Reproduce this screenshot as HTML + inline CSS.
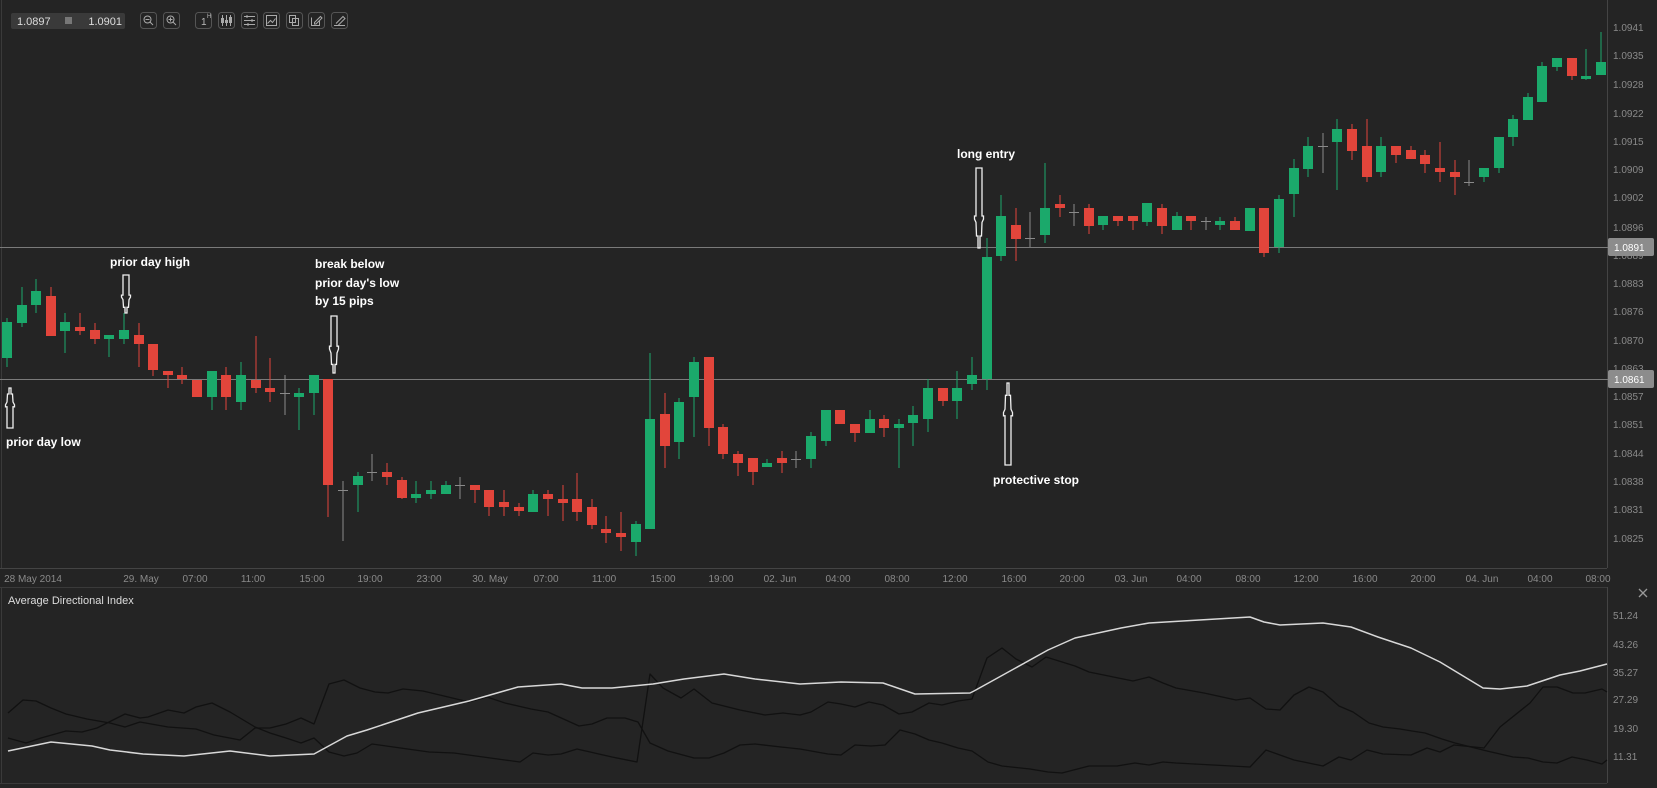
<!DOCTYPE html>
<html><head><meta charset="utf-8">
<style>
html,body{margin:0;padding:0;background:#242424;width:1657px;height:788px;overflow:hidden}
svg{display:block}
text{font-family:"Liberation Sans",sans-serif}
.pl{fill:#8a8a8a;font-size:10px}
.tl{fill:#8a8a8a;font-size:10px;text-anchor:middle}
.an{fill:#fff;font-size:12px;font-weight:bold}
.g{fill:#1ba96b}.r{fill:#e2453b}.d{fill:#8a8a8a}
.ar{fill:none;stroke:#f0f0f0;stroke-width:1.3}
.btn{fill:none;stroke:#555;stroke-width:1}
.ic{fill:none;stroke:#aaa;stroke-width:1}
</style></head><body>
<svg width="1657" height="788" viewBox="0 0 1657 788" xmlns="http://www.w3.org/2000/svg">
<rect width="1657" height="788" fill="#242424"/>
<line x1="1.5" y1="0" x2="1.5" y2="568" stroke="#3a3a3a"/>
<line x1="1607.5" y1="0" x2="1607.5" y2="568" stroke="#444"/>
<line x1="0" y1="568.5" x2="1607" y2="568.5" stroke="#444"/>
<line x1="0" y1="587.5" x2="1607" y2="587.5" stroke="#3a3a3a"/>
<line x1="1607.5" y1="587" x2="1607.5" y2="783" stroke="#444"/>
<line x1="0" y1="783.5" x2="1607" y2="783.5" stroke="#3a3a3a"/>
<line x1="1.5" y1="587" x2="1.5" y2="783" stroke="#3a3a3a"/>

<rect x="11" y="13" width="114" height="16" rx="2" fill="#3a3a3a"/>
<text x="17" y="25" fill="#ddd" font-size="11">1.0897</text>
<rect x="65" y="17" width="7" height="7" fill="#777"/>
<text x="122" y="25" fill="#ddd" font-size="11" text-anchor="end">1.0901</text>
<g>
<rect class="btn" x="140.5" y="12.5" width="16" height="16" rx="3"/>
<circle class="ic" cx="147.5" cy="19.5" r="3.5"/><line class="ic" x1="145.5" y1="19.5" x2="149.5" y2="19.5"/><line class="ic" x1="150" y1="22" x2="153" y2="25"/>
<rect class="btn" x="163.5" y="12.5" width="16" height="16" rx="3"/>
<circle class="ic" cx="170.5" cy="19.5" r="3.5"/><line class="ic" x1="168.5" y1="19.5" x2="172.5" y2="19.5"/><line class="ic" x1="170.5" y1="17.5" x2="170.5" y2="21.5"/><line class="ic" x1="173" y1="22" x2="176" y2="25"/>
<rect class="btn" x="195.5" y="12.5" width="16" height="16" rx="3"/>
<text x="201" y="25" fill="#bbb" font-size="10">1</text><text x="207" y="18" fill="#bbb" font-size="6">H</text>
<rect class="btn" x="218.5" y="12.5" width="16" height="16" rx="3"/>
<path class="ic" d="M222.5 15v11M226.5 15v11M230.5 15v11"/><rect x="221" y="18" width="3" height="5" fill="#aaa"/><rect x="225" y="20" width="3" height="3" fill="#aaa"/><rect x="229" y="17" width="3" height="6" fill="#aaa"/>
<rect class="btn" x="241.5" y="12.5" width="16" height="16" rx="3"/>
<path class="ic" d="M244 16.5h11M244 20.5h11M244 24.5h11"/><path d="M247 15v3M252 19v3M248 23v3" stroke="#aaa"/>
<rect class="btn" x="263.5" y="12.5" width="16" height="16" rx="3"/>
<rect class="ic" x="266.5" y="15.5" width="10" height="10"/><path class="ic" d="M267.5 23.5l3-3 2 2 3-4"/>
<rect class="btn" x="286.5" y="12.5" width="16" height="16" rx="3"/>
<rect class="ic" x="289.5" y="15.5" width="6" height="7"/><rect class="ic" x="292.5" y="18.5" width="6" height="7"/>
<rect class="btn" x="308.5" y="12.5" width="16" height="16" rx="3"/>
<path class="ic" d="M311.5 17.5v8h8v-5M314.5 22.5l6-6 1.5 1.5-6 6h-1.5z"/>
<rect class="btn" x="331.5" y="12.5" width="16" height="16" rx="3"/>
<path class="ic" d="M334 25.5h11M336 23.5l7-7 2 2-7 7"/>
</g>

<g class="pl">
<text x="1613" y="31">1.0941</text>
<text x="1613" y="59">1.0935</text>
<text x="1613" y="88">1.0928</text>
<text x="1613" y="117">1.0922</text>
<text x="1613" y="145">1.0915</text>
<text x="1613" y="173">1.0909</text>
<text x="1613" y="201">1.0902</text>
<text x="1613" y="231">1.0896</text>
<text x="1613" y="259">1.0889</text>
<text x="1613" y="287">1.0883</text>
<text x="1613" y="315">1.0876</text>
<text x="1613" y="344">1.0870</text>
<text x="1613" y="372">1.0863</text>
<text x="1613" y="400">1.0857</text>
<text x="1613" y="428">1.0851</text>
<text x="1613" y="457">1.0844</text>
<text x="1613" y="485">1.0838</text>
<text x="1613" y="513">1.0831</text>
<text x="1613" y="542">1.0825</text>
</g>

<line x1="0" y1="247.5" x2="1608" y2="247.5" stroke="#7a7a7a"/>
<line x1="0" y1="379.5" x2="1608" y2="379.5" stroke="#7a7a7a"/>
<rect x="1608" y="238" width="46" height="18" rx="2" fill="#8c8c8c"/>
<text x="1614" y="251" fill="#fff" font-size="10">1.0891</text>
<rect x="1608" y="370" width="46" height="18" rx="2" fill="#8c8c8c"/>
<text x="1614" y="383" fill="#fff" font-size="10">1.0861</text>

<g class="tl">
<text x="33" y="582">28 May 2014</text>
<text x="141" y="582">29. May</text>
<text x="195" y="582">07:00</text>
<text x="253" y="582">11:00</text>
<text x="312" y="582">15:00</text>
<text x="370" y="582">19:00</text>
<text x="429" y="582">23:00</text>
<text x="490" y="582">30. May</text>
<text x="546" y="582">07:00</text>
<text x="604" y="582">11:00</text>
<text x="663" y="582">15:00</text>
<text x="721" y="582">19:00</text>
<text x="780" y="582">02. Jun</text>
<text x="838" y="582">04:00</text>
<text x="897" y="582">08:00</text>
<text x="955" y="582">12:00</text>
<text x="1014" y="582">16:00</text>
<text x="1072" y="582">20:00</text>
<text x="1131" y="582">03. Jun</text>
<text x="1189" y="582">04:00</text>
<text x="1248" y="582">08:00</text>
<text x="1306" y="582">12:00</text>
<text x="1365" y="582">16:00</text>
<text x="1423" y="582">20:00</text>
<text x="1482" y="582">04. Jun</text>
<text x="1540" y="582">04:00</text>
<text x="1598" y="582">08:00</text>
</g>

<g>
<rect class="g" x="6.5" y="318" width="1" height="49"/><rect class="g" x="2" y="322" width="10" height="36"/>
<rect class="g" x="21.5" y="287" width="1" height="40"/><rect class="g" x="17" y="305" width="10" height="18"/>
<rect class="g" x="35.5" y="279" width="1" height="34"/><rect class="g" x="31" y="291" width="10" height="14"/>
<rect class="r" x="50.5" y="287" width="1" height="49"/><rect class="r" x="46" y="296" width="10" height="40"/>
<rect class="g" x="64.5" y="313" width="1" height="40"/><rect class="g" x="60" y="322" width="10" height="9"/>
<rect class="r" x="79.5" y="313" width="1" height="22"/><rect class="r" x="75" y="327" width="10" height="4"/>
<rect class="r" x="94.5" y="323" width="1" height="21"/><rect class="r" x="90" y="330" width="10" height="9"/>
<rect class="g" x="108.5" y="335" width="1" height="22"/><rect class="g" x="104" y="335" width="10" height="4"/>
<rect class="g" x="123.5" y="313" width="1" height="31"/><rect class="g" x="119" y="330" width="10" height="9"/>
<rect class="r" x="138.5" y="323" width="1" height="44"/><rect class="r" x="134" y="335" width="10" height="9"/>
<rect class="r" x="152.5" y="344" width="1" height="32"/><rect class="r" x="148" y="344" width="10" height="26"/>
<rect class="r" x="167.5" y="371" width="1" height="17"/><rect class="r" x="163" y="371" width="10" height="4"/>
<rect class="r" x="181.5" y="367" width="1" height="17"/><rect class="r" x="177" y="375" width="10" height="4"/>
<rect class="r" x="196.5" y="380" width="1" height="17"/><rect class="r" x="192" y="380" width="10" height="17"/>
<rect class="g" x="211.5" y="371" width="1" height="39"/><rect class="g" x="207" y="371" width="10" height="26"/>
<rect class="r" x="225.5" y="367" width="1" height="43"/><rect class="r" x="221" y="375" width="10" height="22"/>
<rect class="g" x="240.5" y="362" width="1" height="48"/><rect class="g" x="236" y="375" width="10" height="27"/>
<rect class="r" x="255.5" y="336" width="1" height="57"/><rect class="r" x="251" y="380" width="10" height="8"/>
<rect class="r" x="269.5" y="358" width="1" height="44"/><rect class="r" x="265" y="388" width="10" height="4"/>
<rect class="d" x="284.5" y="375" width="1" height="40"/><rect class="d" x="280" y="393" width="10" height="1"/>
<rect class="g" x="298.5" y="388" width="1" height="42"/><rect class="g" x="294" y="393" width="10" height="4"/>
<rect class="g" x="313.5" y="375" width="1" height="40"/><rect class="g" x="309" y="375" width="10" height="18"/>
<rect class="r" x="327.5" y="379" width="1" height="138"/><rect class="r" x="323" y="379" width="10" height="106"/>
<rect class="d" x="342.5" y="481" width="1" height="60"/><rect class="d" x="338" y="490" width="10" height="1"/>
<rect class="g" x="357.5" y="472" width="1" height="40"/><rect class="g" x="353" y="476" width="10" height="9"/>
<rect class="d" x="371.5" y="454" width="1" height="27"/><rect class="d" x="367" y="472" width="10" height="1"/>
<rect class="r" x="386.5" y="463" width="1" height="22"/><rect class="r" x="382" y="472" width="10" height="5"/>
<rect class="r" x="401.5" y="477" width="1" height="22"/><rect class="r" x="397" y="480" width="10" height="18"/>
<rect class="g" x="415.5" y="481" width="1" height="22"/><rect class="g" x="411" y="494" width="10" height="4"/>
<rect class="g" x="430.5" y="481" width="1" height="18"/><rect class="g" x="426" y="490" width="10" height="4"/>
<rect class="g" x="445.5" y="481" width="1" height="13"/><rect class="g" x="441" y="485" width="10" height="9"/>
<rect class="d" x="459.5" y="477" width="1" height="22"/><rect class="d" x="455" y="485" width="10" height="1"/>
<rect class="r" x="474.5" y="485" width="1" height="18"/><rect class="r" x="470" y="485" width="10" height="5"/>
<rect class="r" x="488.5" y="490" width="1" height="26"/><rect class="r" x="484" y="490" width="10" height="17"/>
<rect class="r" x="503.5" y="490" width="1" height="26"/><rect class="r" x="499" y="502" width="10" height="5"/>
<rect class="r" x="518.5" y="503" width="1" height="13"/><rect class="r" x="514" y="507" width="10" height="4"/>
<rect class="g" x="532.5" y="490" width="1" height="22"/><rect class="g" x="528" y="494" width="10" height="18"/>
<rect class="r" x="547.5" y="490" width="1" height="26"/><rect class="r" x="543" y="494" width="10" height="5"/>
<rect class="r" x="562.5" y="485" width="1" height="36"/><rect class="r" x="558" y="499" width="10" height="4"/>
<rect class="r" x="576.5" y="473" width="1" height="48"/><rect class="r" x="572" y="499" width="10" height="13"/>
<rect class="r" x="591.5" y="499" width="1" height="30"/><rect class="r" x="587" y="507" width="10" height="18"/>
<rect class="r" x="605.5" y="516" width="1" height="27"/><rect class="r" x="601" y="529" width="10" height="4"/>
<rect class="r" x="620.5" y="512" width="1" height="39"/><rect class="r" x="616" y="533" width="10" height="4"/>
<rect class="g" x="635.5" y="521" width="1" height="35"/><rect class="g" x="631" y="524" width="10" height="18"/>
<rect class="g" x="649.5" y="353" width="1" height="176"/><rect class="g" x="645" y="419" width="10" height="110"/>
<rect class="r" x="664.5" y="393" width="1" height="75"/><rect class="r" x="660" y="414" width="10" height="32"/>
<rect class="g" x="678.5" y="398" width="1" height="61"/><rect class="g" x="674" y="402" width="10" height="40"/>
<rect class="g" x="693.5" y="357" width="1" height="80"/><rect class="g" x="689" y="362" width="10" height="35"/>
<rect class="r" x="708.5" y="357" width="1" height="89"/><rect class="r" x="704" y="357" width="10" height="71"/>
<rect class="r" x="722.5" y="424" width="1" height="35"/><rect class="r" x="718" y="427" width="10" height="27"/>
<rect class="r" x="737.5" y="451" width="1" height="25"/><rect class="r" x="733" y="454" width="10" height="9"/>
<rect class="r" x="752.5" y="458" width="1" height="27"/><rect class="r" x="748" y="458" width="10" height="14"/>
<rect class="g" x="766.5" y="459" width="1" height="8"/><rect class="g" x="762" y="463" width="10" height="4"/>
<rect class="r" x="781.5" y="451" width="1" height="22"/><rect class="r" x="777" y="458" width="10" height="5"/>
<rect class="d" x="795.5" y="451" width="1" height="17"/><rect class="d" x="791" y="459" width="10" height="1"/>
<rect class="g" x="810.5" y="432" width="1" height="36"/><rect class="g" x="806" y="436" width="10" height="23"/>
<rect class="g" x="825.5" y="410" width="1" height="36"/><rect class="g" x="821" y="410" width="10" height="31"/>
<rect class="r" x="839.5" y="410" width="1" height="14"/><rect class="r" x="835" y="410" width="10" height="14"/>
<rect class="r" x="854.5" y="424" width="1" height="18"/><rect class="r" x="850" y="424" width="10" height="9"/>
<rect class="g" x="869.5" y="410" width="1" height="23"/><rect class="g" x="865" y="419" width="10" height="14"/>
<rect class="r" x="883.5" y="415" width="1" height="22"/><rect class="r" x="879" y="419" width="10" height="9"/>
<rect class="g" x="898.5" y="419" width="1" height="49"/><rect class="g" x="894" y="424" width="10" height="4"/>
<rect class="g" x="912.5" y="406" width="1" height="40"/><rect class="g" x="908" y="415" width="10" height="8"/>
<rect class="g" x="927.5" y="379" width="1" height="53"/><rect class="g" x="923" y="388" width="10" height="31"/>
<rect class="r" x="942.5" y="388" width="1" height="18"/><rect class="r" x="938" y="388" width="10" height="13"/>
<rect class="g" x="956.5" y="371" width="1" height="48"/><rect class="g" x="952" y="388" width="10" height="13"/>
<rect class="g" x="971.5" y="357" width="1" height="33"/><rect class="g" x="967" y="375" width="10" height="9"/>
<rect class="g" x="986.5" y="238" width="1" height="152"/><rect class="g" x="982" y="257" width="10" height="122"/>
<rect class="g" x="1000.5" y="195" width="1" height="66"/><rect class="g" x="996" y="216" width="10" height="40"/>
<rect class="r" x="1015.5" y="208" width="1" height="53"/><rect class="r" x="1011" y="225" width="10" height="14"/>
<rect class="d" x="1029.5" y="212" width="1" height="35"/><rect class="d" x="1025" y="238" width="10" height="1"/>
<rect class="g" x="1044.5" y="163" width="1" height="80"/><rect class="g" x="1040" y="208" width="10" height="27"/>
<rect class="r" x="1059.5" y="195" width="1" height="22"/><rect class="r" x="1055" y="204" width="10" height="4"/>
<rect class="d" x="1073.5" y="204" width="1" height="22"/><rect class="d" x="1069" y="212" width="10" height="1"/>
<rect class="r" x="1088.5" y="204" width="1" height="30"/><rect class="r" x="1084" y="208" width="10" height="18"/>
<rect class="g" x="1102.5" y="216" width="1" height="14"/><rect class="g" x="1098" y="216" width="10" height="9"/>
<rect class="r" x="1117.5" y="216" width="1" height="10"/><rect class="r" x="1113" y="216" width="10" height="5"/>
<rect class="r" x="1132.5" y="216" width="1" height="14"/><rect class="r" x="1128" y="216" width="10" height="5"/>
<rect class="g" x="1146.5" y="203" width="1" height="23"/><rect class="g" x="1142" y="203" width="10" height="19"/>
<rect class="r" x="1161.5" y="204" width="1" height="30"/><rect class="r" x="1157" y="208" width="10" height="18"/>
<rect class="g" x="1176.5" y="212" width="1" height="18"/><rect class="g" x="1172" y="216" width="10" height="14"/>
<rect class="r" x="1190.5" y="216" width="1" height="14"/><rect class="r" x="1186" y="216" width="10" height="5"/>
<rect class="d" x="1205.5" y="217" width="1" height="13"/><rect class="d" x="1201" y="221" width="10" height="1"/>
<rect class="g" x="1219.5" y="217" width="1" height="13"/><rect class="g" x="1215" y="221" width="10" height="4"/>
<rect class="r" x="1234.5" y="217" width="1" height="13"/><rect class="r" x="1230" y="221" width="10" height="9"/>
<rect class="g" x="1249.5" y="208" width="1" height="23"/><rect class="g" x="1245" y="208" width="10" height="23"/>
<rect class="r" x="1263.5" y="208" width="1" height="49"/><rect class="r" x="1259" y="208" width="10" height="45"/>
<rect class="g" x="1278.5" y="195" width="1" height="58"/><rect class="g" x="1274" y="199" width="10" height="48"/>
<rect class="g" x="1293.5" y="159" width="1" height="58"/><rect class="g" x="1289" y="168" width="10" height="26"/>
<rect class="g" x="1307.5" y="137" width="1" height="40"/><rect class="g" x="1303" y="146" width="10" height="23"/>
<rect class="d" x="1322.5" y="133" width="1" height="40"/><rect class="d" x="1318" y="146" width="10" height="1"/>
<rect class="g" x="1336.5" y="119" width="1" height="71"/><rect class="g" x="1332" y="129" width="10" height="13"/>
<rect class="r" x="1351.5" y="124" width="1" height="36"/><rect class="r" x="1347" y="129" width="10" height="22"/>
<rect class="r" x="1366.5" y="119" width="1" height="63"/><rect class="r" x="1362" y="146" width="10" height="31"/>
<rect class="g" x="1380.5" y="137" width="1" height="40"/><rect class="g" x="1376" y="146" width="10" height="26"/>
<rect class="r" x="1395.5" y="146" width="1" height="17"/><rect class="r" x="1391" y="146" width="10" height="9"/>
<rect class="r" x="1410.5" y="146" width="1" height="13"/><rect class="r" x="1406" y="150" width="10" height="9"/>
<rect class="r" x="1424.5" y="150" width="1" height="23"/><rect class="r" x="1420" y="155" width="10" height="9"/>
<rect class="r" x="1439.5" y="142" width="1" height="40"/><rect class="r" x="1435" y="168" width="10" height="4"/>
<rect class="r" x="1454.5" y="160" width="1" height="35"/><rect class="r" x="1450" y="172" width="10" height="5"/>
<rect class="d" x="1468.5" y="160" width="1" height="26"/><rect class="d" x="1464" y="182" width="10" height="1"/>
<rect class="g" x="1483.5" y="168" width="1" height="14"/><rect class="g" x="1479" y="168" width="10" height="9"/>
<rect class="g" x="1498.5" y="137" width="1" height="36"/><rect class="g" x="1494" y="137" width="10" height="31"/>
<rect class="g" x="1512.5" y="115" width="1" height="31"/><rect class="g" x="1508" y="119" width="10" height="18"/>
<rect class="g" x="1527.5" y="93" width="1" height="27"/><rect class="g" x="1523" y="97" width="10" height="23"/>
<rect class="g" x="1541.5" y="62" width="1" height="40"/><rect class="g" x="1537" y="66" width="10" height="36"/>
<rect class="g" x="1556.5" y="58" width="1" height="13"/><rect class="g" x="1552" y="58" width="10" height="9"/>
<rect class="r" x="1571.5" y="58" width="1" height="22"/><rect class="r" x="1567" y="58" width="10" height="18"/>
<rect class="g" x="1585.5" y="49" width="1" height="31"/><rect class="g" x="1581" y="76" width="10" height="3"/>
<rect class="g" x="1600.5" y="32" width="1" height="43"/><rect class="g" x="1596" y="62" width="10" height="13"/>
</g>

<text class="an" x="110" y="266">prior day high</text>
<text class="an" x="6" y="446">prior day low</text>
<text class="an" x="315" y="268">break below</text>
<text class="an" x="315" y="287">prior day's low</text>
<text class="an" x="315" y="305">by 15 pips</text>
<text class="an" x="957" y="158">long entry</text>
<text class="an" x="993" y="484">protective stop</text>

<g class="ar">
<polygon vector-effect="non-scaling-stroke" transform="translate(126,275) scale(1,0.38)" points="-3,0 3,0 3,53 4.5,53 4.5,58 3,65 2.5,85 1,85 1,100 -1,100 -1,85 -2.5,85 -3,65 -4.5,58 -4.5,53 -3,53"/>
<polygon vector-effect="non-scaling-stroke" transform="translate(334,316) scale(1,0.57)" points="-3,0 3,0 3,53 4.5,53 4.5,58 3,65 2.5,85 1,85 1,100 -1,100 -1,85 -2.5,85 -3,65 -4.5,58 -4.5,53 -3,53"/>
<polygon vector-effect="non-scaling-stroke" transform="translate(979,168) scale(1,0.80)" points="-3,0 3,0 3,60 4.5,60 4.5,64 3,68 2.5,85 1,85 1,100 -1,100 -1,85 -2.5,85 -3,68 -4.5,64 -4.5,60 -3,60"/>
<polygon vector-effect="non-scaling-stroke" transform="translate(10,428) scale(1,-0.40)" points="-3,0 3,0 3,53 4.5,53 4.5,58 3,65 2.5,85 1,85 1,100 -1,100 -1,85 -2.5,85 -3,65 -4.5,58 -4.5,53 -3,53"/>
<polygon vector-effect="non-scaling-stroke" transform="translate(1008,465) scale(1,-0.82)" points="-3,0 3,0 3,60 4.5,60 4.5,64 3,68 2.5,85 1,85 1,100 -1,100 -1,85 -2.5,85 -3,68 -4.5,64 -4.5,60 -3,60"/>
</g>

<text x="8" y="604" fill="#ddd" font-size="11">Average Directional Index</text>
<path d="M1639 589l8 8M1647 589l-8 8" stroke="#999" stroke-width="1.3"/>
<g class="pl">
<text x="1613" y="619">51.24</text>
<text x="1613" y="648">43.26</text>
<text x="1613" y="676">35.27</text>
<text x="1613" y="703">27.29</text>
<text x="1613" y="732">19.30</text>
<text x="1613" y="760">11.31</text>
</g>
<g fill="none" stroke-linejoin="round">
<polyline stroke="#111" stroke-width="1.3" points="8,713 23,700 36,701 51,708 66,714 87,719 110,723 125,727 140,722 168,727 196,729 214,735 240,740 255,728 270,728 286,724 301,718 314,724 329,684 344,680 360,688 375,692 388,693 403,689 423,691 444,696 469,702 487,697 505,703 531,709 548,712 579,726 592,724 607,718 625,718 638,722 650,743 668,751 694,758 709,758 724,753 740,745 755,744 781,747 800,749 828,754 841,755 855,745 871,746 885,745 900,730 915,734 929,740 942,743 958,748 972,751 988,762 1002,766 1030,769 1048,772 1062,773 1089,766 1117,766 1135,763 1149,765 1163,762 1176,763 1250,767 1266,750 1294,760 1323,766 1339,757 1351,760 1367,750 1383,754 1411,755 1427,748 1440,752 1454,745 1484,748 1500,727 1530,703 1543,687 1557,687 1573,693 1585,693 1602,689 1607,692"/>
<polyline stroke="#111" stroke-width="1.3" points="8,738 26,743 41,738 66,731 82,732 97,728 125,714 140,718 148,717 168,710 184,713 196,707 212,703 230,712 255,727 270,733 286,738 301,743 314,738 329,752 344,756 357,753 372,744 429,752 454,753 505,760 520,762 533,753 548,755 561,754 577,749 612,757 637,762 650,674 663,688 681,698 694,689 712,703 740,710 765,715 783,713 800,715 811,712 828,702 841,704 855,707 869,702 883,705 899,714 912,712 929,703 942,705 958,701 972,699 987,658 1002,648 1016,659 1032,667 1046,657 1075,666 1089,672 1133,681 1149,677 1163,683 1176,688 1204,693 1236,700 1250,698 1266,709 1280,710 1294,695 1309,687 1323,692 1339,706 1353,712 1369,723 1383,727 1400,729 1412,731 1425,733 1442,739 1455,743 1487,751 1513,757 1528,758 1543,762 1557,763 1572,757 1587,760 1602,764 1607,760"/>
<polyline stroke="#d8d8d8" stroke-width="1.5" points="8,751 51,742 92,746 110,750 143,754 184,756 230,751 270,756 314,754 347,736 367,730 418,713 469,701 518,687 561,684 582,688 612,688 653,684 684,679 724,674 755,679 800,684 841,682 883,683 915,694 970,693 974,691 1048,650 1075,638 1121,628 1149,623 1250,617 1264,622 1280,625 1323,623 1351,627 1378,637 1411,648 1440,662 1483,688 1500,689 1527,686 1560,675 1580,671 1607,664"/>
</g>
</svg>
</body></html>
